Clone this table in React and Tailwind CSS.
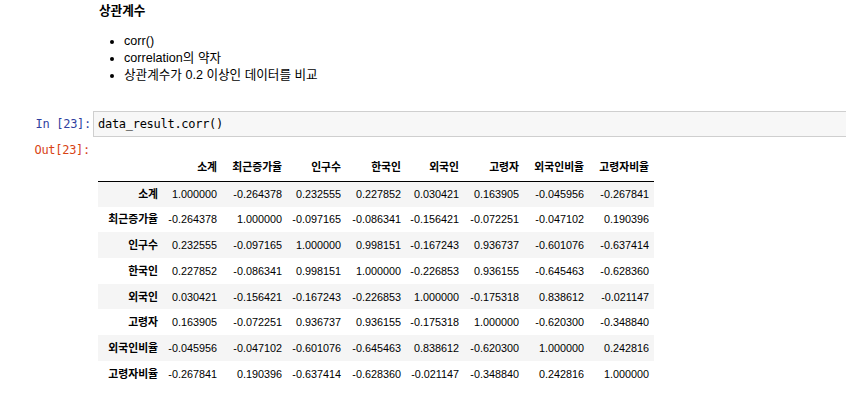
import React from "react";

const cols = ["소계", "최근증가율", "인구수", "한국인", "외국인", "고령자", "외국인비율", "고령자비율"];
const widths = [65, 59, 65, 59, 60, 58, 60, 65, 65];
const data = [
  ["소계", "1.000000", "-0.264378", "0.232555", "0.227852", "0.030421", "0.163905", "-0.045956", "-0.267841"],
  ["최근증가율", "-0.264378", "1.000000", "-0.097165", "-0.086341", "-0.156421", "-0.072251", "-0.047102", "0.190396"],
  ["인구수", "0.232555", "-0.097165", "1.000000", "0.998151", "-0.167243", "0.936737", "-0.601076", "-0.637414"],
  ["한국인", "0.227852", "-0.086341", "0.998151", "1.000000", "-0.226853", "0.936155", "-0.645463", "-0.628360"],
  ["외국인", "0.030421", "-0.156421", "-0.167243", "-0.226853", "1.000000", "-0.175318", "0.838612", "-0.021147"],
  ["고령자", "0.163905", "-0.072251", "0.936737", "0.936155", "-0.175318", "1.000000", "-0.620300", "-0.348840"],
  ["외국인비율", "-0.045956", "-0.047102", "-0.601076", "-0.645463", "0.838612", "-0.620300", "1.000000", "0.242816"],
  ["고령자비율", "-0.267841", "0.190396", "-0.637414", "-0.628360", "-0.021147", "-0.348840", "0.242816", "1.000000"],
];

const bullets = ["corr()", "correlation의 약자", "상관계수가 0.2 이상인 데이터를 비교"];

export default function App() {
  return (
    <div className="w-[846px] h-[396px] overflow-hidden bg-white text-black font-['Liberation_Sans','Noto_Sans_CJK_KR',sans-serif]">
      {/* Markdown cell */}
      <div className="pl-[99px] pt-[2px]">
        <div className="h-[18px] leading-[18px] text-[12.6px] font-bold">상관계수</div>
        <ul className="mt-[13px]">
          {bullets.map((b) => (
            <li key={b} className="flex items-center h-[17px] leading-[17px] text-[12.6px]">
              <span className="ml-[11px] w-[4px] h-[4px] rounded-full bg-black" />
              <span className="ml-[10px]">{b}</span>
            </li>
          ))}
        </ul>
      </div>

      {/* Input cell */}
      <div className="flex mt-[27px] font-['DejaVu_Sans_Mono','Noto_Sans_CJK_KR',monospace] text-[12px] tracking-[-0.28px]">
        <div className="w-[93px] pr-[2px] text-right text-[#303F9F] leading-[26px]">In [23]:</div>
        <div className="flex-1 h-[26px] bg-[#f7f7f7] border border-r-0 border-[#cfcfcf] pl-[4px] leading-[24px]">
          data_result.corr()
        </div>
      </div>

      {/* Output cell */}
      <div className="flex mt-[4px]">
        <div className="w-[93px] pr-[3px] text-right text-[#D84315] leading-[18px] font-['DejaVu_Sans_Mono','Noto_Sans_CJK_KR',monospace] text-[12px] tracking-[-0.28px]">
          Out[23]:
        </div>
        <div className="pt-[12px] pl-[5px]">
          <table className="table-fixed border-collapse w-[556px] text-[10.8px]">
            <colgroup>
              {widths.map((w, i) => (
                <col key={i} style={{ width: w }} />
              ))}
            </colgroup>
            <thead>
              <tr className="h-[28px] border-b border-black">
                <th className="p-0" />
                {cols.map((c) => (
                  <th key={c} className="p-0 pr-[5px] text-right font-bold whitespace-nowrap">
                    {c}
                  </th>
                ))}
              </tr>
            </thead>
            <tbody>
              {data.map((row, ri) => (
                <tr key={ri} className={ri % 2 === 0 ? "h-[25.7px] bg-[#f5f5f5]" : "h-[25.7px] bg-white"}>
                  {row.map((v, ci) =>
                    ci === 0 ? (
                      <th key={ci} className="p-0 pr-[5px] text-right font-bold whitespace-nowrap">
                        {v}
                      </th>
                    ) : (
                      <td key={ci} className="p-0 pr-[5px] text-right whitespace-nowrap">
                        {v}
                      </td>
                    )
                  )}
                </tr>
              ))}
            </tbody>
          </table>
        </div>
      </div>
    </div>
  );
}
